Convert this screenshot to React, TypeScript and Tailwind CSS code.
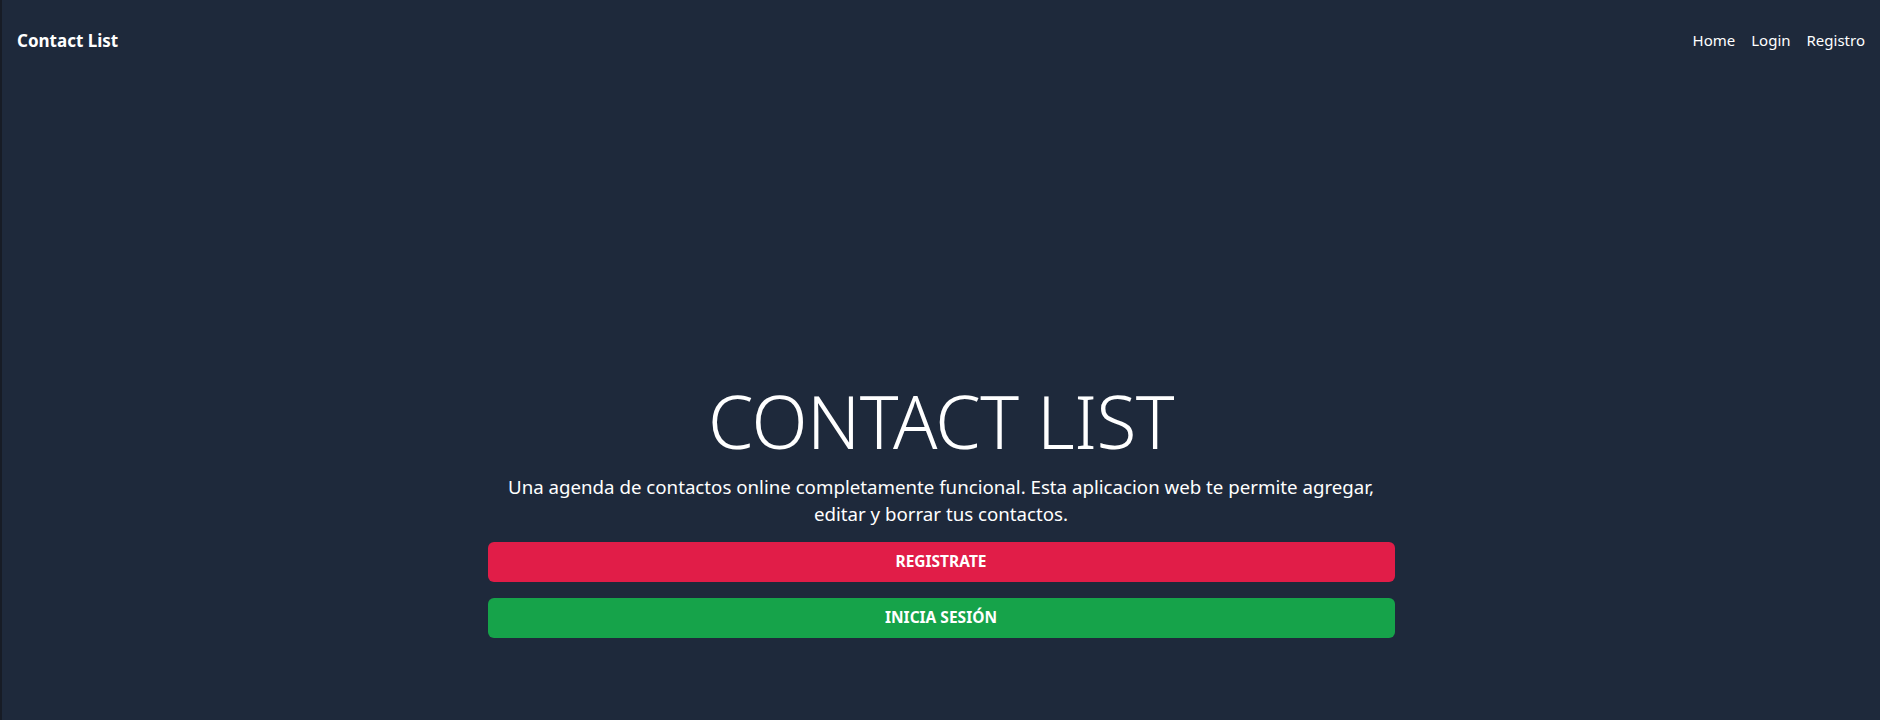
export default function App() {
  return (
    <div className="min-h-[720px] w-full bg-[#1e293b] border-l-2 border-[#171c26] text-white" style={{ fontFamily: '"Noto Sans", "Open Sans", sans-serif' }}>
      <nav className="flex items-center justify-between h-[81px] pl-[15px] pr-[15px]">
        <span className="text-[17px] font-bold">Contact List</span>
        <div className="flex items-center gap-[16px] text-[15px]">
          <a>Home</a>
          <a>Login</a>
          <a>Registro</a>
        </div>
      </nav>
      <main className="flex flex-col items-center pt-[303px]">
        <h1 className="text-[73px] font-light leading-none tracking-[-0.5px]">CONTACT LIST</h1>
        <p className="mt-[16px] w-[895px] text-center text-[18.7px] leading-[27px]">
          Una agenda de contactos online completamente funcional. Esta aplicacion web te permite agregar, editar y borrar tus contactos.
        </p>
        <button className="mt-[15px] w-[907px] h-[40px] rounded-[6px] bg-[#e11d48] text-[15.5px] font-bold uppercase">Registrate</button>
        <button className="mt-[16px] w-[907px] h-[40px] rounded-[6px] bg-[#16a34a] text-[15.5px] font-bold uppercase">Inicia sesión</button>
      </main>
    </div>
  );
}
